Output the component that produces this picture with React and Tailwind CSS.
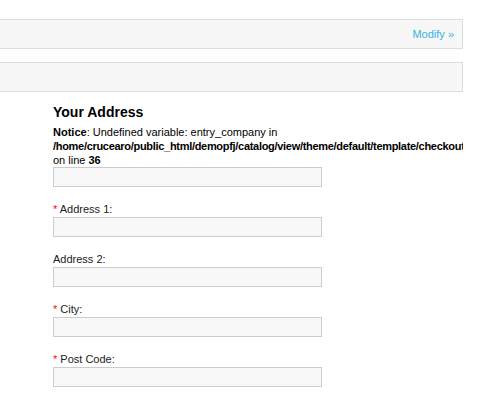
const fields = [
  { label: "Address 1:", required: true },
  { label: "Address 2:", required: false },
  { label: "City:", required: true },
  { label: "Post Code:", required: true },
];

function Field({ label, required }) {
  return (
    <div className="mb-[15px]">
      <div className="text-[11px] leading-[15px] text-[#222]">
        {required && <span className="text-[#ff0000]">* </span>}
        {label}
      </div>
      <div className="h-[20px] w-[269px] border border-[#cccccc] bg-[#f8f8f8]" />
    </div>
  );
}

export default function App() {
  return (
    <div className="min-h-[393px] w-[500px] overflow-hidden bg-white font-['Liberation_Sans',Arial,sans-serif] text-[#000]">
      <div className="w-[463px] pt-[19px]">
        <div className="flex h-[30px] items-center justify-end border-y border-r border-[#dbdee1] bg-[#f7f7f7] pr-[8px]">
          <span className="text-[11px] text-[#38b0e3]">Modify &raquo;</span>
        </div>
        <div className="mt-[13px] h-[30px] border-y border-r border-[#dbdee1] bg-[#f7f7f7]" />

        <div className="overflow-hidden pl-[53px] pt-[12px]">
          <h2 className="text-[14px] font-bold leading-[17px]">Your Address</h2>
          <div className="mt-[4px] whitespace-nowrap text-[11px] leading-[14px] text-[#000]">
            <div>
              <b>Notice</b>: Undefined variable: entry_company in
            </div>
            <div className="tracking-[-0.3px]">
              <b>/home/crucearo/public_html/demopfj/catalog/view/theme/default/template/checkout/address.tpl</b>
            </div>
            <div>
              on line <b>36</b>
            </div>
          </div>
          <div className="mb-[15px] h-[20px] w-[269px] border border-[#cccccc] bg-[#f8f8f8]" />
          {fields.map((f) => (
            <Field key={f.label} label={f.label} required={f.required} />
          ))}
        </div>
      </div>
    </div>
  );
}
